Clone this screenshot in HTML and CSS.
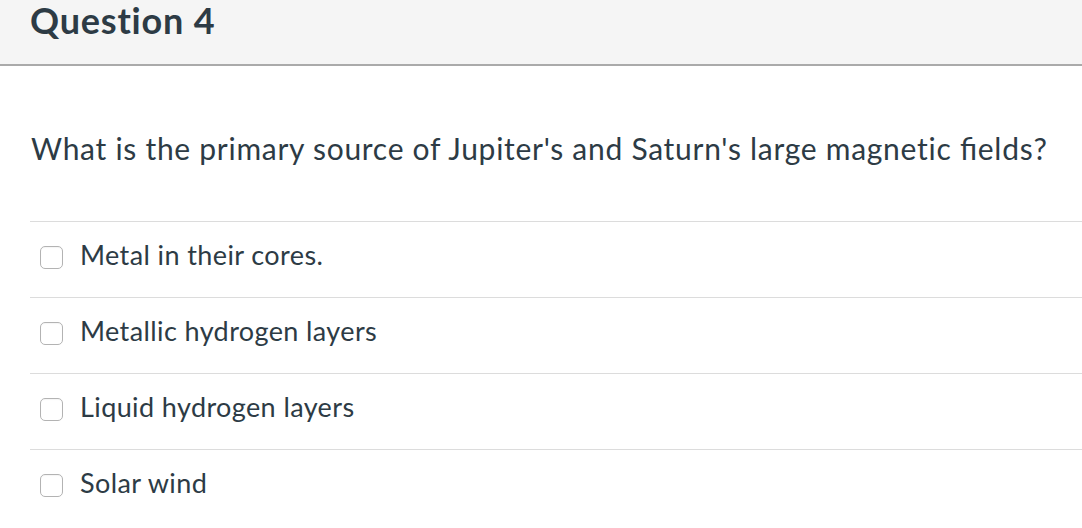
FILE: index.html
```html
<!DOCTYPE html>
<html>
<head>
<meta charset="utf-8">
<link rel="stylesheet" href="styles.css">
</head>
<body>
<div class="header"><h2 class="title">Question 4</h2></div>
<div class="body">
  <p class="question">What is the primary source of Jupiter's and Saturn's large magnetic <span class="lig">fields</span>?</p>
  <div class="answers">
    <label class="answer"><span class="box"></span><span class="text">Metal in their cores.</span></label>
    <label class="answer"><span class="box"></span><span class="text">Metallic hydrogen layers</span></label>
    <label class="answer"><span class="box"></span><span class="text">Liquid hydrogen layers</span></label>
    <label class="answer"><span class="box"></span><span class="text">Solar wind</span></label>
  </div>
</div>
</body>
</html>
```
FILE: styles.css
```css
html, body { margin: 0; padding: 0; background: #fff; }
body { font-family: Lato, "Open Sans", sans-serif; color: #2d3b45; width: 1082px; height: 528px; overflow: hidden; }
.header { background: #f5f5f5; border-bottom: 2px solid #aaaaaa; padding: 2px 0 0 30px; box-sizing: border-box; height: 66px; }
.title { margin: 0; font-size: 36px; font-weight: 700; line-height: 36px; letter-spacing: 0.8px; }
.body { padding-left: 30px; }
.question { margin: 0; padding: 64px 0 55px 1px; font-size: 30px; line-height: 36px; letter-spacing: 0.72px; white-space: nowrap; }
.lig { font-feature-settings: "liga" 1; }
.answers { display: flex; flex-direction: column; }
.answer { display: flex; align-items: flex-start; height: 75px; border-top: 1px solid #dcdcdc; padding-left: 10px; }
.box { flex: none; width: 23px; height: 23px; box-sizing: border-box; border: 1px solid #b3b3b3; border-radius: 5px; background: #fff; margin-top: 24px; margin-right: 17px; box-shadow: inset 0 1px 1px rgba(0,0,0,0.04); }
.text { font-size: 27px; line-height: 30px; margin-top: 18px; letter-spacing: 0.4px; }
```
